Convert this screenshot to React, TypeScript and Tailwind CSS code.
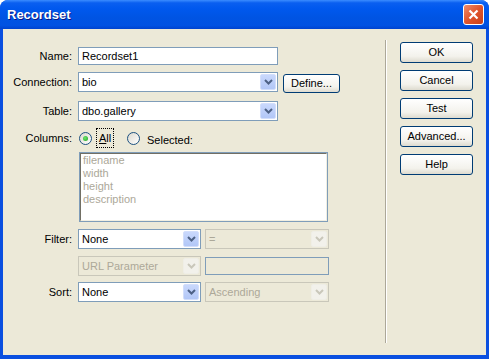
import React from "react";

const font = { fontFamily: '"Liberation Sans", Arial, sans-serif' };

function Chevron({ disabled }: { disabled?: boolean }) {
  return (
    <svg width="9" height="6" viewBox="0 0 9 6">
      <path
        d="M1 1 L4.5 4.5 L8 1"
        fill="none"
        stroke={disabled ? "#c9c7ba" : "#4d6185"}
        strokeWidth="2"
      />
    </svg>
  );
}

function Select({ value, w, disabled }: { value: string; w: string; disabled?: boolean }) {
  return (
    <div
      className={`flex h-[20px] ${w} border ${
        disabled ? "border-[#c9c7ba] bg-[#ece9d8]" : "border-[#7f9db9] bg-white"
      }`}
    >
      <div
        className={`flex flex-1 items-center pl-[3px] text-[11px] ${
          disabled ? "text-[#aca899]" : "text-black"
        }`}
      >
        {value}
      </div>
      <div
        className={`m-[1px] flex w-[16px] items-center justify-center rounded-[2px] border ${
          disabled
            ? "border-[#efeee6] bg-[#f2f1eb]"
            : "border-[#d2defb] bg-[linear-gradient(to_bottom,#c9d8fc,#b2c7f7)]"
        }`}
      >
        <Chevron disabled={disabled} />
      </div>
    </div>
  );
}

function XPButton({ label, w, h }: { label: string; w: string; h: string }) {
  return (
    <div
      className={`flex ${w} ${h} items-center justify-center rounded-[3px] border border-[#003c74] bg-[linear-gradient(to_bottom,#ffffff,#f3f2ec_70%,#dedbcf)] text-[11px] text-black`}
    >
      {label}
    </div>
  );
}

function Radio({ checked }: { checked?: boolean }) {
  return (
    <div className="flex h-[13px] w-[13px] items-center justify-center rounded-full border border-[#1c5180] bg-[linear-gradient(135deg,#dcd9cf,#ffffff)]">
      {checked && (
        <div className="h-[5px] w-[5px] rounded-full bg-[radial-gradient(circle_at_40%_40%,#6ee66e,#21a121)]" />
      )}
    </div>
  );
}

function Label({ text }: { text: string }) {
  return <div className="w-[70px] pr-[1px] text-right text-[11px] text-black">{text}</div>;
}

export default function App() {
  return (
    <div style={font} className="h-[359px] w-[489px] bg-white">
      <div className="flex h-[359px] w-[489px] flex-col overflow-hidden rounded-t-[8px] bg-[#0a4fe0]">
        {/* Title bar */}
        <div className="flex h-[29px] items-center justify-between bg-[linear-gradient(to_bottom,#3b8cff_0%,#0a5ff0_10%,#0058ee_30%,#0054e3_60%,#0152e2_88%,#0043cf_100%)] pl-[7px] pr-[5px]">
          <div className="text-[13px] font-bold text-white [text-shadow:1px_1px_0_#0a1883]">
            Recordset
          </div>
          <div className="flex h-[21px] w-[21px] items-center justify-center rounded-[3px] border border-white bg-[linear-gradient(135deg,#f08c6c,#e0542c_50%,#c8401a)]">
            <svg width="11" height="11" viewBox="0 0 11 11">
              <path d="M1.5 1.5 L9.5 9.5 M9.5 1.5 L1.5 9.5" stroke="white" strokeWidth="2.2" />
            </svg>
          </div>
        </div>
        {/* Body */}
        <div className="flex flex-1 bg-[#0a4fe0] px-[3px] pb-[4px]">
          <div className="flex flex-1 bg-[#ece9d8]">
            {/* form */}
            <div className="flex w-[382px] flex-col pt-[18px]">
              <div className="flex h-[18px] items-center gap-[5px]">
                <Label text="Name:" />
                <div className="flex h-[18px] w-[200px] items-center border border-[#7f9db9] bg-white pl-[3px] text-[11px] text-black">
                  Recordset1
                </div>
              </div>
              <div className="mt-[7px] flex h-[20px] items-center gap-[5px]">
                <Label text="Connection:" />
                <Select value="bio" w="w-[200px]" />
                <div className="mt-[3px]">
                  <XPButton label="Define..." w="w-[57px]" h="h-[19px]" />
                </div>
              </div>
              <div className="mt-[9px] flex h-[20px] items-center gap-[5px]">
                <Label text="Table:" />
                <Select value="dbo.gallery" w="w-[200px]" />
              </div>
              <div className="mt-[7px] flex h-[20px] items-center gap-[5px]">
                <Label text="Columns:" />
                <div className="ml-[1px] flex items-center">
                  <Radio checked />
                  <div className="ml-[4px] flex h-[20px] w-[18px] items-end border border-dotted border-black pb-[2px] pl-[2px] text-[11px] leading-[13px] text-black">
                    <span>
                      <span className="underline">A</span>ll
                    </span>
                  </div>
                  <div className="ml-[13px]">
                    <Radio />
                  </div>
                  <div className="ml-[7px] mt-[5px] text-[11px] text-black">Selected:</div>
                </div>
              </div>
              <div className="ml-[76px] mt-[4px] h-[70px] w-[249px] border border-[#7f9db9]">
                <div className="h-full w-full border border-t-[#716f64] border-l-[#716f64] border-b-[#f1efe2] border-r-[#f1efe2] bg-white pl-[2px] text-[11px] leading-[13px] text-[#aca899]">
                  <div>filename</div>
                  <div>width</div>
                  <div>height</div>
                  <div>description</div>
                </div>
              </div>
              <div className="mt-[7px] flex h-[20px] items-center gap-[5px]">
                <Label text="Filter:" />
                <Select value="None" w="w-[123px]" />
                <div className="-ml-[1px]">
                  <Select value="=" w="w-[124px]" disabled />
                </div>
              </div>
              <div className="mt-[7px] flex h-[20px] items-center gap-[5px]">
                <div className="w-[70px]" />
                <Select value="URL Parameter" w="w-[123px]" disabled />
                <div className="-ml-[1px] h-[18px] w-[124px] border border-[#7f9db9] bg-[#ece9d8]" />
              </div>
              <div className="mt-[6px] flex h-[20px] items-center gap-[5px]">
                <Label text="Sort:" />
                <Select value="None" w="w-[123px]" />
                <div className="-ml-[1px]">
                  <Select value="Ascending" w="w-[124px]" disabled />
                </div>
              </div>
            </div>
            {/* separator */}
            <div className="mt-[11px] flex h-[303px] w-[2px]">
              <div className="w-[1px] bg-[#aca899]" />
              <div className="w-[1px] bg-white" />
            </div>
            {/* buttons */}
            <div className="flex flex-col gap-[7px] pl-[13px] pt-[13px]">
              <XPButton label="OK" w="w-[73px]" h="h-[21px]" />
              <XPButton label="Cancel" w="w-[73px]" h="h-[21px]" />
              <XPButton label="Test" w="w-[73px]" h="h-[21px]" />
              <XPButton label="Advanced..." w="w-[73px]" h="h-[21px]" />
              <XPButton label="Help" w="w-[73px]" h="h-[21px]" />
            </div>
          </div>
        </div>
      </div>
    </div>
  );
}
